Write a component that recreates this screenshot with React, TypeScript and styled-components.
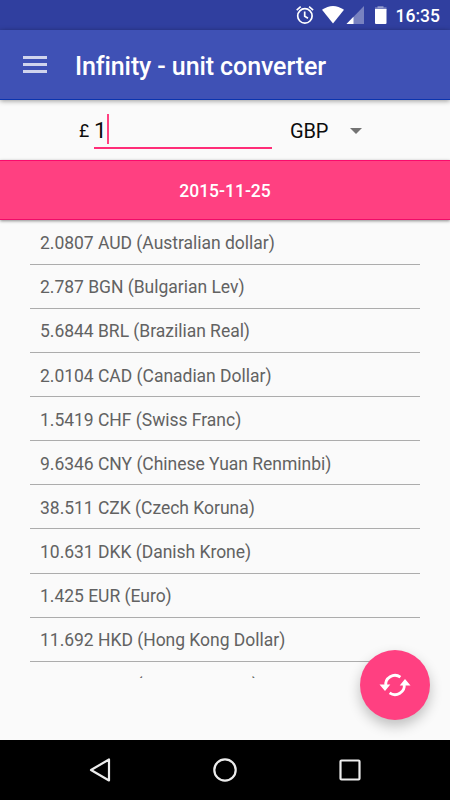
import React from "react";
import styled, { createGlobalStyle } from "styled-components";

const Global = createGlobalStyle`
  * { box-sizing: border-box; }
  body { margin: 0; background: #fafafa; font-family: Roboto, "Noto Sans", sans-serif; }
`;

const Screen = styled.div`
  width: 450px;
  height: 800px;
  display: flex;
  flex-direction: column;
  position: relative;
  overflow: hidden;
  background: #fafafa;
`;

const StatusBar = styled.header`
  height: 30px;
  flex: none;
  background: #303f9f;
  color: #fff;
`;

const StatusIcons = styled.svg`
  display: block;
  width: 450px;
  height: 30px;
`;

const AppBar = styled.div`
  height: 70px;
  flex: none;
  display: flex;
  align-items: center;
  padding: 3px 23px 0;
  gap: 28px;
  background: #3f51b5;
  border-bottom: 1px solid #0b34ae;
  box-shadow: 0 1px 5px rgba(0, 0, 0, 0.4);
  z-index: 1;
`;

const MenuButton = styled.div`
  width: 24px;
  height: 17px;
  display: flex;
  flex-direction: column;
  justify-content: space-between;
  margin-top: -3px;
`;

const MenuLine = styled.span`
  height: 3px;
  background: #d0d4ed;
`;

const Title = styled.h1`
  margin: 0;
  padding-top: 2px;
  color: #fff;
  font-size: 25px;
  font-weight: 500;
  line-height: 30px;
  letter-spacing: -0.1px;
  white-space: nowrap;
`;

const AmountRow = styled.div`
  height: 60px;
  flex: none;
  display: flex;
  padding-left: 79px;
  color: #0c0c0c;
`;

const Symbol = styled.span`
  width: 15px;
  padding-top: 20px;
  font-size: 17.5px;
  line-height: 22px;
`;

const AmountField = styled.div`
  width: 178px;
  height: 49px;
  display: flex;
  border-bottom: 2px solid #ff2d78;
  font-size: 22.5px;
  line-height: 32px;
  padding-top: 14px;
`;

const Caret = styled.span`
  width: 2.5px;
  height: 30px;
  background: #ff4081;
`;

const Currency = styled.div`
  display: flex;
  align-items: center;
  height: 60px;
  padding: 1px 0 0 18px;
  gap: 22px;
  font-size: 20px;
  letter-spacing: -0.2px;
`;

const DropArrow = styled.svg`
  width: 12px;
  height: 6px;
`;

const DateBar = styled.div`
  height: 60px;
  flex: none;
  display: flex;
  align-items: center;
  justify-content: center;
  padding-top: 1px;
  background: #ff4081;
  border-top: 1px solid #fa0a6c;
  border-bottom: 1px solid #f00b69;
  box-shadow: 0 1px 3px rgba(0, 0, 0, 0.45);
  color: #fff;
  font-size: 17.5px;
  font-weight: 500;
  z-index: 1;
`;

const RateList = styled.ul`
  list-style: none;
  margin: 0 30px;
  padding: 0.4px 0 0;
  height: 458px;
  flex: none;
  overflow: hidden;
`;

const Rate = styled.li`
  height: 44.15px;
  padding: 12.75px 10px 0;
  border-bottom: 1px solid #acacac;
  color: #626262;
  font-size: 17.5px;
  line-height: 21px;
  letter-spacing: -0.02px;
  white-space: nowrap;
`;

const RefreshButton = styled.div`
  position: absolute;
  left: 360px;
  top: 650px;
  width: 70px;
  height: 70px;
  border-radius: 50%;
  background: #ff4081;
  box-shadow: 0 6px 13px rgba(0, 0, 0, 0.24);
  z-index: 2;
`;

const NavBar = styled.nav`
  height: 60px;
  flex: none;
  margin-top: auto;
  display: flex;
  justify-content: center;
  align-items: center;
  gap: 95px;
  background: #000;
`;

const NavIcon = styled.svg`
  width: 30px;
  height: 30px;
  fill: none;
  stroke: #ececec;
  stroke-width: 2.2;
`;

const rates = [
  "2.0807 AUD (Australian dollar)",
  "2.787 BGN (Bulgarian Lev)",
  "5.6844 BRL (Brazilian Real)",
  "2.0104 CAD (Canadian Dollar)",
  "1.5419 CHF (Swiss Franc)",
  "9.6346 CNY (Chinese Yuan Renminbi)",
  "38.511 CZK (Czech Koruna)",
  "10.631 DKK (Danish Krone)",
  "1.425 EUR (Euro)",
  "11.692 HKD (Hong Kong Dollar)",
  "10.877 HRK (Croatian Kuna)",
];

export default function App() {
  return (
    <>
      <Global />
      <Screen>
        <StatusBar>
          <StatusIcons viewBox="0 0 450 30" fill="#fff">
            <g fill="none" stroke="#fff" strokeWidth="1.7">
              <circle cx="304.9" cy="15.9" r="7.2" />
              <path d="M304.7 11.5v4.8l3.3 2M296.7 10.1l4-3.4M309.1 6.7l4 3.4" />
            </g>
            <path d="M322 9.8Q333 2.2 344 9.8L333 23.4z" />
            <path d="M364 6v18h-17.5z" opacity=".35" />
            <path d="M353.5 16.8V24h-7z" />
            <path d="M377.5 6h6v2h-6z" opacity=".35" />
            <path d="M375 7.3h11.5v3H375z" opacity=".35" />
            <path d="M375 9h11.5v14q0 1-1 1H376q-1 0-1-1z" />
            <text x="395.5" y="22" fontSize="17.5" fontWeight="500">16:35</text>
          </StatusIcons>
        </StatusBar>
        <AppBar>
          <MenuButton>
            <MenuLine />
            <MenuLine />
            <MenuLine />
          </MenuButton>
          <Title>Infinity - unit converter</Title>
        </AppBar>
        <AmountRow>
          <Symbol>£</Symbol>
          <AmountField>
            1<Caret />
          </AmountField>
          <Currency>
            GBP
            <DropArrow viewBox="0 0 12 6">
              <path d="M0 0h12L6 6z" fill="#737373" />
            </DropArrow>
          </Currency>
        </AmountRow>
        <DateBar>2015-11-25</DateBar>
        <RateList>
          {rates.map((rate) => (
            <Rate key={rate}>{rate}</Rate>
          ))}
        </RateList>
        <RefreshButton>
          <svg width="70" height="70" viewBox="0 0 70 70">
            <g fill="none" stroke="#fff" strokeWidth="2.8">
              <path d="M40.4 27.1A9.3 9.3 0 0 0 25.8 36" />
              <path d="M29.6 42.9A9.3 9.3 0 0 0 44.2 34" />
            </g>
            <path d="M19.5 34.6h10.8L25 40.9zM50.5 35.4H39.7l5.3-6.3z" fill="#fff" />
          </svg>
        </RefreshButton>
        <NavBar>
          <NavIcon viewBox="0 0 30 30">
            <path d="M24 4.5v21L6 15z" strokeLinejoin="round" />
          </NavIcon>
          <NavIcon viewBox="0 0 30 30">
            <circle cx="15" cy="15" r="10.7" />
          </NavIcon>
          <NavIcon viewBox="0 0 30 30">
            <rect x="5.5" y="5.5" width="19" height="19" rx="1" />
          </NavIcon>
        </NavBar>
      </Screen>
    </>
  );
}
